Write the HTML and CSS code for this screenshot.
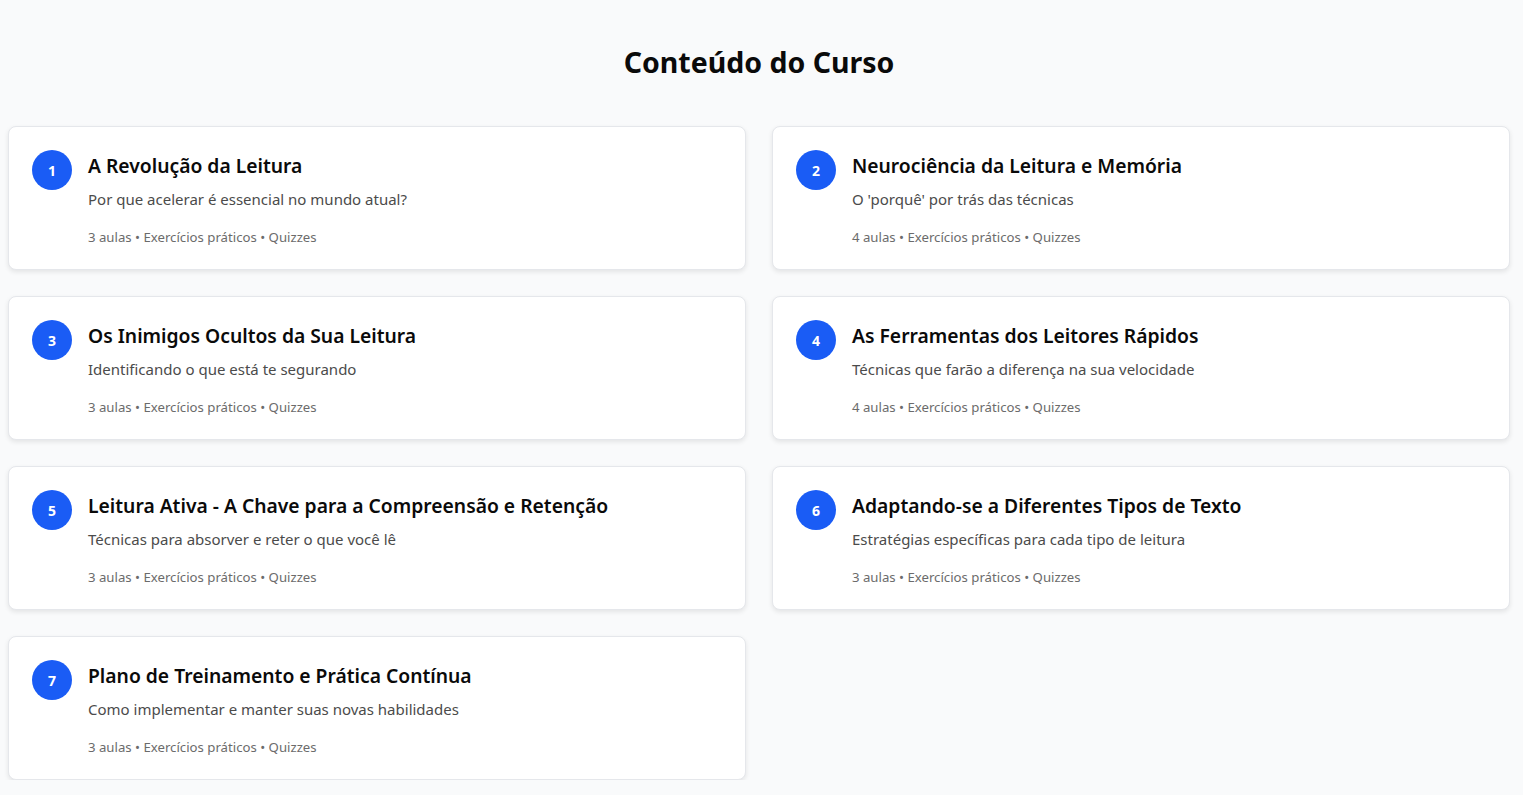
FILE: index.html
```html
<!DOCTYPE html>
<html lang="pt">
<head>
<meta charset="utf-8">
<title>Conteúdo do Curso</title>
<link rel="stylesheet" href="styles.css">
</head>
<body>
<main class="page">
  <h1 class="page-title">Conteúdo do Curso</h1>
  <div class="modules">
    <div class="module">
      <div class="num">1</div>
      <div class="info">
        <h2 class="m-title">A Revolução da Leitura</h2>
        <p class="m-sub">Por que acelerar é essencial no mundo atual?</p>
        <p class="m-meta">3 aulas • Exercícios práticos • Quizzes</p>
      </div>
    </div>
    <div class="module">
      <div class="num">2</div>
      <div class="info">
        <h2 class="m-title">Neurociência da Leitura e Memória</h2>
        <p class="m-sub">O 'porquê' por trás das técnicas</p>
        <p class="m-meta">4 aulas • Exercícios práticos • Quizzes</p>
      </div>
    </div>
    <div class="module">
      <div class="num">3</div>
      <div class="info">
        <h2 class="m-title">Os Inimigos Ocultos da Sua Leitura</h2>
        <p class="m-sub">Identificando o que está te segurando</p>
        <p class="m-meta">3 aulas • Exercícios práticos • Quizzes</p>
      </div>
    </div>
    <div class="module">
      <div class="num">4</div>
      <div class="info">
        <h2 class="m-title">As Ferramentas dos Leitores Rápidos</h2>
        <p class="m-sub">Técnicas que farão a diferença na sua velocidade</p>
        <p class="m-meta">4 aulas • Exercícios práticos • Quizzes</p>
      </div>
    </div>
    <div class="module">
      <div class="num">5</div>
      <div class="info">
        <h2 class="m-title">Leitura Ativa - A Chave para a Compreensão e Retenção</h2>
        <p class="m-sub">Técnicas para absorver e reter o que você lê</p>
        <p class="m-meta">3 aulas • Exercícios práticos • Quizzes</p>
      </div>
    </div>
    <div class="module">
      <div class="num">6</div>
      <div class="info">
        <h2 class="m-title">Adaptando-se a Diferentes Tipos de Texto</h2>
        <p class="m-sub">Estratégias específicas para cada tipo de leitura</p>
        <p class="m-meta">3 aulas • Exercícios práticos • Quizzes</p>
      </div>
    </div>
    <div class="module">
      <div class="num">7</div>
      <div class="info">
        <h2 class="m-title">Plano de Treinamento e Prática Contínua</h2>
        <p class="m-sub">Como implementar e manter suas novas habilidades</p>
        <p class="m-meta">3 aulas • Exercícios práticos • Quizzes</p>
      </div>
    </div>
  </div>
</main>
</body>
</html>
```
FILE: styles.css
```css
html, body {
  margin: 0;
  padding: 0;
  background: #f9fafb;
}
body {
  font-family: "Noto Sans", "Open Sans", sans-serif;
  color: #111;
}
.page {
  padding: 40px 13px 0 8px;
}
.page-title {
  margin: 0 0 42px;
  text-align: center;
  font-size: 28.5px;
  font-weight: 700;
  line-height: 44px;
  color: #0a0a0a;
}
.modules {
  display: grid;
  grid-template-columns: 1fr 1fr;
  column-gap: 26px;
  row-gap: 26px;
}
.module {
  display: flex;
  gap: 16px;
  background: #fff;
  border: 1px solid #e5e7eb;
  border-radius: 8px;
  box-shadow: 0 2px 5px rgba(0, 0, 0, 0.09);
  padding: 24px 23px 23px;
}
.num {
  flex: 0 0 40px;
  width: 40px;
  height: 40px;
  border-radius: 50%;
  background: #1a5cf5;
  color: #fff;
  font-size: 14px;
  font-weight: 700;
  display: flex;
  align-items: center;
  justify-content: center;
  margin-top: -1px;
}
.info {
  min-width: 0;
}
.m-title {
  margin: 2px 0 0;
  font-size: 19.3px;
  font-weight: 600;
  line-height: 26px;
  color: #0a0a0a;
}
.m-sub {
  margin: 10px 0 0;
  font-size: 15px;
  line-height: 20px;
  color: #4b4b4b;
}
.m-meta {
  margin: 19px 0 0;
  font-size: 13.2px;
  line-height: 18px;
  color: #6b6b6b;
}
```
